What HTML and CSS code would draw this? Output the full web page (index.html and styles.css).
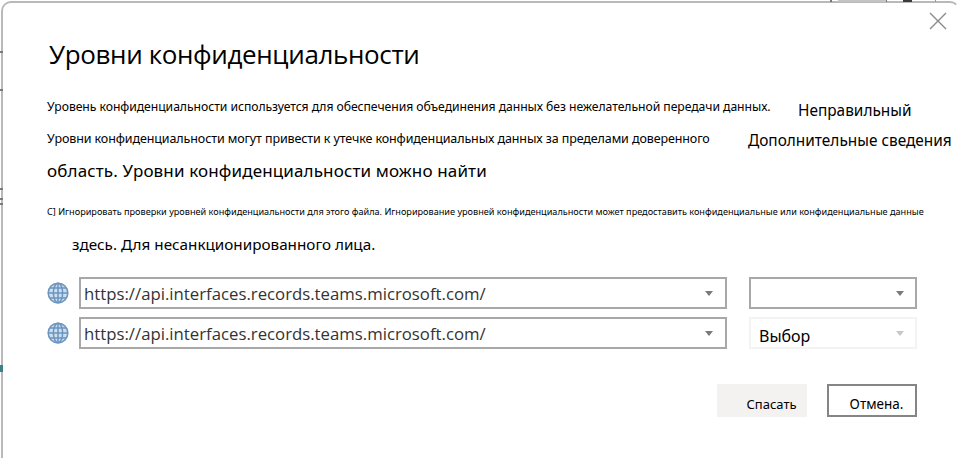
FILE: index.html
```html
<!DOCTYPE html>
<html lang="ru">
<head>
<meta charset="utf-8">
<title>Уровни конфиденциальности</title>
<link rel="stylesheet" href="styles.css">
</head>
<body>
<div class="dialog">
  <button class="close" aria-label="Закрыть">
    <svg width="18" height="18" viewBox="0 0 18 18"><path d="M1 1L17 17M17 1L1 17" stroke="#8a8a8a" stroke-width="1.4" fill="none"/></svg>
  </button>
  <h1 class="title">Уровни конфиденциальности</h1>
  <div class="intro-row row-a">
    <p class="intro">Уровень конфиденциальности используется для обеспечения объединения данных без нежелательной передачи данных.</p>
    <span class="link link-a">Неправильный</span>
  </div>
  <div class="intro-row row-b">
    <p class="intro intro-b">Уровни конфиденциальности могут привести к утечке конфиденциальных данных за пределами доверенного</p>
    <span class="link link-b">Дополнительные сведения</span>
  </div>
  <p class="area">область. Уровни конфиденциальности можно найти</p>
  <p class="ignore">С] Игнорировать проверки уровней конфиденциальности для этого файла. Игнорирование уровней конфиденциальности может предоставить конфиденциальные или конфиденциальные данные</p>
  <p class="here">здесь. Для несанкционированного лица.</p>
  <div class="sources">
    <div class="source">
      <svg class="globe" width="22" height="22" viewBox="0 0 22 22"><circle cx="11" cy="11" r="10.5" fill="#cfdeee"/><g fill="none" stroke="#6b95c0" stroke-width="1.5"><circle cx="11" cy="11" r="9.8"/><ellipse cx="11" cy="11" rx="4.6" ry="9.8"/><path d="M11 1.2V20.8M1.2 11H20.8M3 6H19M3 16H19"/></g></svg>
      <div class="select url"><span>https://api.interfaces.records.teams.microsoft.com/</span><i class="caret"></i></div>
      <div class="select level"><span></span><i class="caret"></i></div>
    </div>
    <div class="source">
      <svg class="globe" width="22" height="22" viewBox="0 0 22 22"><circle cx="11" cy="11" r="10.5" fill="#cfdeee"/><g fill="none" stroke="#6b95c0" stroke-width="1.5"><circle cx="11" cy="11" r="9.8"/><ellipse cx="11" cy="11" rx="4.6" ry="9.8"/><path d="M11 1.2V20.8M1.2 11H20.8M3 6H19M3 16H19"/></g></svg>
      <div class="select url"><span>https://api.interfaces.records.teams.microsoft.com/</span><i class="caret"></i></div>
      <div class="select level disabled"><span class="choice">Выбор</span><i class="caret"></i></div>
    </div>
  </div>
  <div class="actions">
    <button class="btn save">Спасать</button>
    <button class="btn cancel">Отмена.</button>
  </div>
</div>
<div class="behind" aria-hidden="true">
  <i class="tick-l t1"></i><i class="tick-l t2"></i><i class="tick-l t3"></i><i class="tick-l t4"></i><i class="tick-l t5"></i><i class="tick-l t6"></i>
  <i class="tick-t a1"></i><i class="tick-t a2"></i><i class="tick-t a3"></i><i class="tick-t a4"></i><i class="tick-t a5"></i>
</div>
</body>
</html>
```
FILE: styles.css
```css
* { box-sizing: border-box; }
html, body { margin: 0; height: 100%; }
body { position: relative; width: 964px; height: 458px; overflow: hidden; background: #fff; font-family: "Noto Sans", "Open Sans", sans-serif; color: #000; }
p, h1 { margin: 0; font-weight: 400; }
.dialog { position: relative; width: 959px; height: 470px; margin: 1px 0 0 1px; padding: 33px 12px 0 44px; border: 2px solid #b9b9b9; border-right-color: #fff; border-bottom: 0; border-radius: 10px 10px 0 0; background: #fff; display: flex; flex-direction: column; align-items: flex-start; }
.close { position: absolute; top: 9px; right: 11px; width: 18px; height: 18px; padding: 0; border: 0; background: none; display: flex; }
.title { font-size: 26px; line-height: 36px; font-family: "Open Sans", sans-serif; margin-left: 2px; letter-spacing: -.37px; }
.intro-row { display: flex; align-items: center; width: 100%; }
.row-a { margin-top: 23px; height: 24px; }
.row-b { margin-top: 8px; height: 24px; }
.intro { font-size: 12.2px; line-height: 18px; white-space: nowrap; flex: none; width: 700px; letter-spacing: -.05px; }
.intro-b { font-size: 12.5px; letter-spacing: -.11px; }
.link { font-size: 15.4px; line-height: 24px; white-space: nowrap; }
.link-a { margin-left: 51px; padding-top: 8px; }
.link-b { margin-left: 1px; padding-top: 4px; }
.area { font-size: 17px; line-height: 22px; margin-top: 9px; letter-spacing: .14px; }
.ignore { font-size: 9.13px; line-height: 14px; white-space: nowrap; margin-top: 23px; }
.here { font-size: 15.25px; line-height: 20px; margin: 15px 0 0 25px; }
.sources { margin-top: 23px; display: flex; flex-direction: column; gap: 8px; }
.source { display: flex; align-items: center; }
.globe { flex: none; margin-right: 10px; }
.select { height: 32px; border: 2px solid #a8a8a8; display: flex; align-items: center; justify-content: space-between; background: #fff; }
.select.url { width: 648px; padding: 0 12px 0 3px; font-size: 16.75px; color: #333; font-family: "Open Sans", sans-serif; }
.select.level { width: 168px; margin-left: 22px; padding: 0 11px 0 8px; font-size: 16px; }
.select.disabled { border-color: #f3f3f3; }
.select.disabled .caret { border-top-color: #c8c8c8; }
.choice { padding-top: 5px; }
.caret { width: 0; height: 0; border-left: 4.5px solid transparent; border-right: 4.5px solid transparent; border-top: 5px solid #7a7a7a; flex: none; }
.actions { display: flex; gap: 20px; margin: 35px 0 0 670px; }
.btn { width: 90px; height: 33px; padding: 7px 0 0 9px; font: 13.5px "Noto Sans", sans-serif; color: #000; }
.save { background: #f3f2f1; border: 0; padding-left: 19px; font-size: 13px; }
.cancel { background: #fff; border: 2px solid #858585; }
.behind i { position: absolute; display: block; }
.tick-l { left: 0; width: 3px; height: 2px; background: #7b7b7b; }
.t1 { top: 51px; }
.t2 { top: 89px; }
.t3 { top: 188px; }
.t4 { top: 198px; }
.t5 { top: 203px; }
.t6 { top: 365px; height: 7px; background: #3c7f86; }
.tick-t { top: 0; height: 2px; background: #777; }
.a1 { left: 830px; width: 2px; }
.a2 { left: 838px; width: 48px; background: #c4c4c4; }
.a3 { left: 886px; width: 1px; }
.a4 { left: 903px; width: 9px; background: #3f3a36; }
.a5 { left: 935px; width: 1px; background: #999; }
```
